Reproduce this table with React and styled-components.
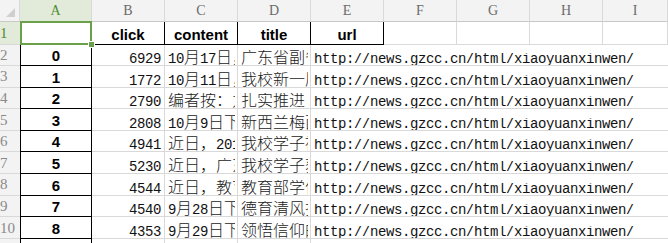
import React from 'react';
import styled, { createGlobalStyle, css } from 'styled-components';

const Global = createGlobalStyle`
  html, body { margin: 0; padding: 0; background: #fff; overflow: hidden; }
  #root { width: 668px; height: 243px; overflow: hidden; }
`;

const GRID = '#d9d9d9';
const HEAD_BG = '#f3f3f3';
const GREEN = '#6aa04a';

const Sheet = styled.div`
  display: grid;
  grid-template-columns: 20px 72px repeat(7, 73px) 1fr;
  grid-template-rows: 22px 22.5px repeat(10, 21.6px);
  width: 668px;
`;

const Corner = styled.div`
  background: ${HEAD_BG};
  border-right: 1px solid ${GRID};
  border-bottom: 1px solid #c8c8c8;
  box-sizing: border-box;
  display: flex;
  align-items: flex-end;
  justify-content: flex-end;
  padding: 0 4px 4px 0;
`;

const ColHead = styled.div`
  box-sizing: border-box;
  background: ${HEAD_BG};
  border-right: 1px solid ${GRID};
  border-bottom: 1px solid #c8c8c8;
  color: #6b6b6b;
  font-family: 'Liberation Serif', serif;
  font-size: 14px;
  display: flex;
  align-items: center;
  justify-content: center;
  padding-top: 1px;
  ${(p) =>
    p.$active &&
    css`
      background: #e2ebda;
      color: #4f8b33;
      border-bottom-color: #9cbf86;
    `}
`;

const RowHead = styled.div`
  box-sizing: border-box;
  background: ${HEAD_BG};
  border-bottom: 1px solid ${GRID};
  color: #8a8a8a;
  font-family: 'Liberation Serif', serif;
  font-size: 15px;
  display: flex;
  align-items: center;
  padding-top: 1px;
  overflow: hidden;
  ${(p) =>
    p.$active &&
    css`
      background: #e2ebda;
      color: #4f8b33;
    `}
`;

const Cell = styled.div`
  box-sizing: border-box;
  border-right: 1px solid ${GRID};
  border-bottom: 1px solid ${GRID};
  overflow: hidden;
  white-space: nowrap;
  display: flex;
  align-items: flex-end;
  min-width: 0;
  color: #111;
  font-family: 'Liberation Mono', monospace;
  font-size: 14px;
  letter-spacing: -0.4px;
  line-height: 12px;
  padding: 0 2px 0 3px;
  ${(p) => p.$right && css`justify-content: flex-end; padding-right: 3px;`}
  ${(p) => p.$span && css`grid-column: span ${p.$span}; border-right: none;`}
`;

/* Text that runs past its cell edge is cut off at the cell, as a spreadsheet does */
const Clip = styled.span`
  display: block;
  max-width: 100%;
  overflow: hidden;
  white-space: nowrap;
`;

const BoldCell = styled(Cell)`
  font-family: 'Liberation Sans', Arial, sans-serif;
  font-weight: bold;
  font-size: 15px;
  letter-spacing: 0;
  color: #000;
  justify-content: center;
  padding: 0 0 3px 0;
  border-right-color: #000;
  border-bottom-color: #000;
  ${(p) => p.$index && css`border-left: 1px solid #000;`}
`;

const SelectedCell = styled(Cell)`
  position: relative;
  overflow: visible;
  border-left: 1px solid #000;
  &::after {
    content: '';
    position: absolute;
    left: -1px;
    top: -1px;
    right: -1px;
    bottom: -1px;
    border: 2px solid ${GREEN};
  }
`;

const Handle = styled.span`
  position: absolute;
  right: -4px;
  bottom: -4px;
  width: 5px;
  height: 5px;
  background: ${GREEN};
  border: 1px solid #fff;
  z-index: 2;
`;

const Han = styled.span`
  font-family: 'Noto Sans CJK SC', sans-serif;
  font-size: 16px;
  letter-spacing: 0;
  font-weight: 300;
  color: #1a1a1a;
`;

// Split a cell string into latin and CJK runs so each gets its own face
function Mixed({ text }) {
  const parts = text.match(/[\u0000-\u00ff]+|[^\u0000-\u00ff]+/g) || [];
  return (
    <Clip>
      {parts.map((p, i) =>
        /^[\u0000-\u00ff]+$/.test(p) ? <span key={i}>{p}</span> : <Han key={i}>{p}</Han>
      )}
    </Clip>
  );
}

const letters = ['A', 'B', 'C', 'D', 'E', 'F', 'G', 'H', 'I'];
const URL = 'http://news.gzcc.cn/html/xiaoyuanxinwen/';

const rows = [
  [0, 6929, '10月17日，广东省副省长到我校调研', '广东省副省长到我校调研指导工作'],
  [1, 1772, '10月11日，我校新一届学生会成立', '我校新一届学生会成立'],
  [2, 2790, '编者按：为深入学习贯彻', '扎实推进“两学一做”学习教育'],
  [3, 2808, '10月9日下午，新西兰梅西大学', '新西兰梅西大学代表团来访'],
  [4, 4941, '近日，2017年广东省', '我校学子被评为优秀志愿者'],
  [5, 5230, '近日，广东省教育厅', '我校学子获全国大赛一等奖'],
  [6, 4544, '近日，教育部公布', '教育部学位中心公布评估结果'],
  [7, 4540, '9月28日下午，', '德育清风扫校园'],
  [8, 4353, '9月29日下午，', '领悟信仰的力量'],
  [9, 4122, '9月30日上午，', '喜迎国庆'],
];

export default function App() {
  return (
    <>
      <Global />
      <Sheet>
        <Corner>
          <svg width="9" height="9" viewBox="0 0 9 9">
            <path d="M9 0 L9 9 L0 9 Z" fill="#cfcfcf" />
          </svg>
        </Corner>
        {letters.map((l) => (
          <ColHead key={l} $active={l === 'A'}>
            {l}
          </ColHead>
        ))}

        <RowHead $active>1</RowHead>
        <SelectedCell>
          <Handle />
        </SelectedCell>
        {['click', 'content', 'title', 'url'].map((h) => (
          <BoldCell key={h}>{h}</BoldCell>
        ))}
        <Cell />
        <Cell />
        <Cell />
        <Cell />

        {rows.map(([idx, clicks, content, title], i) => (
          <React.Fragment key={idx}>
            <RowHead>{i + 2}</RowHead>
            <BoldCell $index>{idx}</BoldCell>
            <Cell $right>{clicks}</Cell>
            <Cell>
              <Mixed text={content} />
            </Cell>
            <Cell>
              <Mixed text={title} />
            </Cell>
            <Cell $span={5}>
              <Clip>{URL}</Clip>
            </Cell>
          </React.Fragment>
        ))}
      </Sheet>
    </>
  );
}
